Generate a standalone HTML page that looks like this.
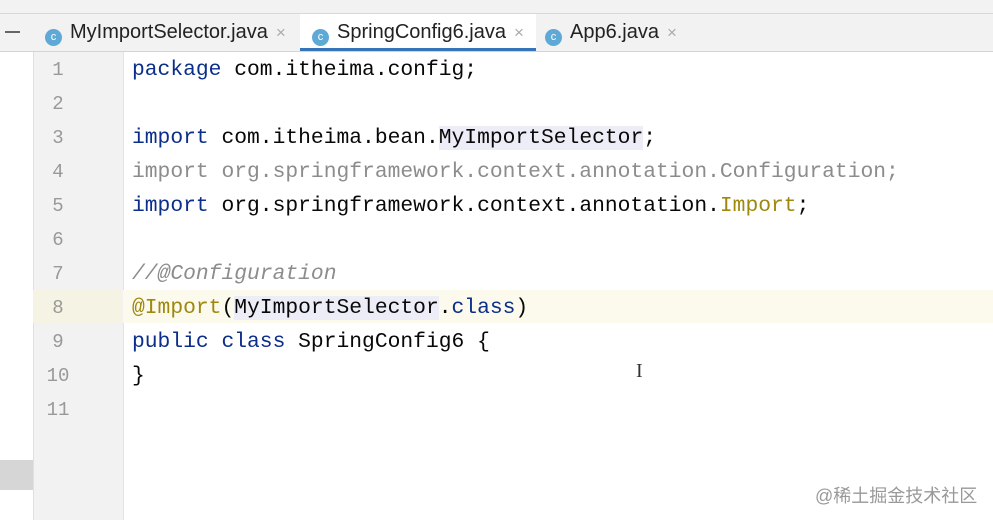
<!DOCTYPE html><html><head><style>
body{margin:0;width:993px;height:520px;overflow:hidden;background:#fff;position:relative;font-family:"Liberation Mono",monospace}
.top{position:absolute;left:0;top:0;width:993px;height:13px;background:#f2f2f2;border-bottom:1px solid #d8d8d8}
.tabs{position:absolute;left:0;top:14px;width:993px;height:37px;background:#f2f2f2;border-bottom:1px solid #d4d4d4;font-family:"Liberation Sans",sans-serif;font-size:20px;color:#222}
.tab{position:absolute;top:0;height:37px;line-height:37px}
.ic{display:inline-block;width:17px;height:17px;border-radius:50%;background:#5fa9d6;color:#fff;font-size:11px;line-height:17px;text-align:center;vertical-align:-2px;margin-right:8px}
.x{color:#aaa;margin-left:8px;font-size:17px}
.lstrip{position:absolute;left:0;top:52px;width:33px;height:468px;background:#fff}
.gut{position:absolute;left:33px;top:52px;width:89px;height:468px;background:#f2f2f2;border-left:1px solid #e0e0e0;border-right:1px solid #e4e4e4}
.ln{position:absolute;left:28px;width:60px;text-align:center;color:#999;font-size:19px}
.code{position:absolute;left:132px;font-size:21.3px;color:#080808;white-space:pre}
.k{color:#0b2e8a}.g{color:#8c8c8c}.a{color:#9e880d}.h{background:#ededf7}
.cm{color:#8c8c8c;font-style:italic}
</style></head><body>
<div class="top"></div>
<div class="tabs">
<div style="position:absolute;left:5px;top:17px;width:15px;height:2px;background:#666"></div>
<div class="tab" style="left:45px"><span class="ic">c</span>MyImportSelector.java<span class="x">×</span></div>
<div class="tab" style="left:300px;background:#fff;padding:0 12px;border-bottom:3px solid #3574b8;height:34px"><span class="ic">c</span>SpringConfig6.java<span class="x">×</span></div>
<div class="tab" style="left:545px"><span class="ic">c</span>App6.java<span class="x">×</span></div>
</div>
<div class="lstrip"></div>
<div style="position:absolute;left:0;top:460px;width:33px;height:30px;background:#d6d6d6"></div>
<div class="gut"></div>
<div style="position:absolute;left:33px;top:290px;width:89px;height:33px;background:#f5f3e3"></div>
<div style="position:absolute;left:123px;top:290px;width:870px;height:33px;background:#fcfaed"></div>
<div class="ln" style="top:59px">1</div>
<div class="ln" style="top:93px">2</div>
<div class="ln" style="top:127px">3</div>
<div class="ln" style="top:161px">4</div>
<div class="ln" style="top:195px">5</div>
<div class="ln" style="top:229px">6</div>
<div class="ln" style="top:263px">7</div>
<div class="ln" style="top:297px">8</div>
<div class="ln" style="top:331px">9</div>
<div class="ln" style="top:365px">10</div>
<div class="ln" style="top:399px">11</div>
<div class="code" style="top:58px"><span class="k">package</span> com.itheima.config;</div>
<div class="code" style="top:126px"><span class="k">import</span> com.itheima.bean.<span class="h">MyImportSelector</span>;</div>
<div class="code g" style="top:160px">import org.springframework.context.annotation.Configuration;</div>
<div class="code" style="top:194px"><span class="k">import</span> org.springframework.context.annotation.<span class="a">Import</span>;</div>
<div class="code cm" style="top:262px">//@Configuration</div>
<div class="code" style="top:296px"><span class="a">@Import</span>(<span class="h">MyImportSelector</span>.<span class="k">class</span>)</div>
<div class="code" style="top:330px"><span class="k">public class</span> SpringConfig6 {</div>
<div class="code" style="top:364px">}</div>
<div style="position:absolute;left:636px;top:360px;font-size:20px;color:#333;font-family:'Liberation Serif',serif">I</div>
<div style="position:absolute;left:815px;top:482px;font-size:18px;color:#999;font-family:'Liberation Sans','Noto Sans CJK SC',sans-serif">@稀土掘金技术社区</div>
</body></html>
